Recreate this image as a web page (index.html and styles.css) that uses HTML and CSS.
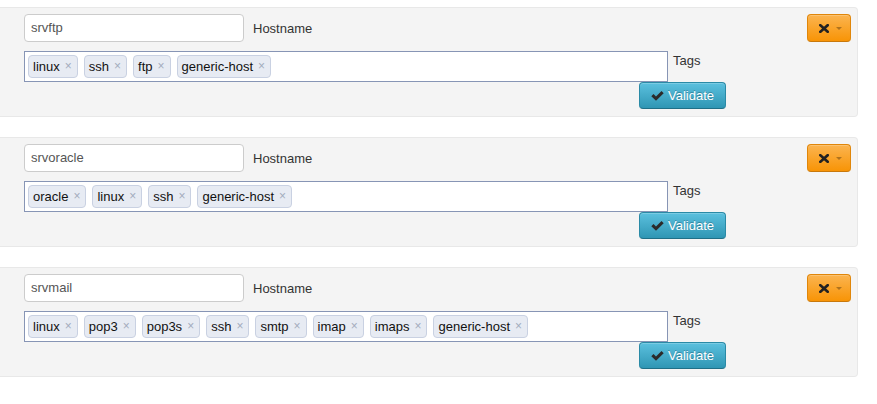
FILE: index.html
```html
<!DOCTYPE html>
<html>
<head>
<meta charset="utf-8">
<link rel="stylesheet" href="styles.css">
</head>
<body>
<div class="host">
  <div class="main">
    <div class="row-host">
      <div class="text-input">srvftp</div>
      <span class="label">Hostname</span>
    </div>
    <div class="row-tags">
      <div class="tag-box">
        <span class="tag">linux<span class="rm">×</span></span>
        <span class="tag">ssh<span class="rm">×</span></span>
        <span class="tag">ftp<span class="rm">×</span></span>
        <span class="tag">generic-host<span class="rm">×</span></span>
      </div>
      <span class="label label-tags">Tags</span>
    </div>
    <div class="row-actions">
      <button class="btn-validate"><svg class="ico-ok" viewBox="0 0 13 10" width="13" height="10"><path d="M0.3 5.2 L2.5 3 L5 5.4 L10.5 0 L12.7 2.2 L5 9.8 Z" fill="#2b2b2b"/></svg>Validate</button>
    </div>
  </div>
  <div class="side">
    <button class="btn-warn"><svg class="ico-x" viewBox="0 0 10 9" width="10" height="9"><path d="M1.3 1.2 L8.7 7.8 M8.7 1.2 L1.3 7.8" stroke="#222" stroke-width="2.7" stroke-linecap="square"/></svg><span class="caret"></span></button>
  </div>
</div>

<div class="host">
  <div class="main">
    <div class="row-host">
      <div class="text-input">srvoracle</div>
      <span class="label">Hostname</span>
    </div>
    <div class="row-tags">
      <div class="tag-box">
        <span class="tag">oracle<span class="rm">×</span></span>
        <span class="tag">linux<span class="rm">×</span></span>
        <span class="tag">ssh<span class="rm">×</span></span>
        <span class="tag">generic-host<span class="rm">×</span></span>
      </div>
      <span class="label label-tags">Tags</span>
    </div>
    <div class="row-actions">
      <button class="btn-validate"><svg class="ico-ok" viewBox="0 0 13 10" width="13" height="10"><path d="M0.3 5.2 L2.5 3 L5 5.4 L10.5 0 L12.7 2.2 L5 9.8 Z" fill="#2b2b2b"/></svg>Validate</button>
    </div>
  </div>
  <div class="side">
    <button class="btn-warn"><svg class="ico-x" viewBox="0 0 10 9" width="10" height="9"><path d="M1.3 1.2 L8.7 7.8 M8.7 1.2 L1.3 7.8" stroke="#222" stroke-width="2.7" stroke-linecap="square"/></svg><span class="caret"></span></button>
  </div>
</div>

<div class="host">
  <div class="main">
    <div class="row-host">
      <div class="text-input">srvmail</div>
      <span class="label">Hostname</span>
    </div>
    <div class="row-tags">
      <div class="tag-box">
        <span class="tag">linux<span class="rm">×</span></span>
        <span class="tag">pop3<span class="rm">×</span></span>
        <span class="tag">pop3s<span class="rm">×</span></span>
        <span class="tag">ssh<span class="rm">×</span></span>
        <span class="tag">smtp<span class="rm">×</span></span>
        <span class="tag">imap<span class="rm">×</span></span>
        <span class="tag">imaps<span class="rm">×</span></span>
        <span class="tag">generic-host<span class="rm">×</span></span>
      </div>
      <span class="label label-tags">Tags</span>
    </div>
    <div class="row-actions">
      <button class="btn-validate"><svg class="ico-ok" viewBox="0 0 13 10" width="13" height="10"><path d="M0.3 5.2 L2.5 3 L5 5.4 L10.5 0 L12.7 2.2 L5 9.8 Z" fill="#2b2b2b"/></svg>Validate</button>
    </div>
  </div>
  <div class="side">
    <button class="btn-warn"><svg class="ico-x" viewBox="0 0 10 9" width="10" height="9"><path d="M1.3 1.2 L8.7 7.8 M8.7 1.2 L1.3 7.8" stroke="#222" stroke-width="2.7" stroke-linecap="square"/></svg><span class="caret"></span></button>
  </div>
</div>
</body>
</html>
```

FILE: styles.css
```css
* { box-sizing: border-box; }
html, body { margin: 0; padding: 0; background: #fff; }
body {
  padding-top: 7px;
  font-family: "Liberation Sans", Arial, sans-serif;
  font-size: 13px;
  color: #333;
}
.host {
  display: flex;
  width: 858px;
  height: 110px;
  margin-bottom: 20px;
  padding: 6px 6px 0 24px;
  background: #f4f4f4;
  border: 1px solid #e8e8e8;
  border-left: 0;
  border-radius: 0 4px 4px 0;
}
.main {
  width: 702px;
  display: flex;
  flex-direction: column;
}
.row-host {
  display: flex;
  align-items: center;
  gap: 9px;
}
.text-input {
  width: 220px;
  height: 28px;
  padding: 0 6px;
  line-height: 26px;
  background: #fff;
  border: 1px solid #ccc;
  border-radius: 4px;
  color: #555;
}
.label {
  line-height: 15px;
  color: #333;
}
.row-tags {
  display: flex;
  align-items: flex-start;
  gap: 5px;
  margin-top: 9px;
}
.tag-box {
  width: 644px;
  height: 31px;
  padding: 3px;
  display: flex;
  gap: 6px;
  background: #fff;
  border: 1px solid #8795b5;
}
.tag {
  display: flex;
  align-items: center;
  height: 23px;
  line-height: 21px;
  padding: 0 5px 0 4px;
  background: #e7ebf3;
  border: 1px solid #c9d1e2;
  border-radius: 4px;
  color: #111;
}
.rm {
  margin-left: 5px;
  font-size: 12px;
  color: #a3abbd;
}
.label-tags { padding-top: 2px; }
.row-actions {
  display: flex;
  justify-content: flex-end;
}
.btn-validate {
  display: flex;
  align-items: center;
  gap: 4px;
  width: 87px;
  height: 27px;
  padding: 0 0 0 11px;
  font-family: inherit;
  font-size: 13px;
  color: #fff;
  text-shadow: 0 -1px 0 rgba(0,0,0,0.25);
  background: linear-gradient(#5bc0de, #2f96b4);
  border: 1px solid #2a8aa6;
  border-bottom-color: #1f6f87;
  border-radius: 4px;
  box-shadow: inset 0 1px 0 rgba(255,255,255,0.2);
}
.ico-ok { display: block; }
.side {
  margin-left: auto;
}
.btn-warn {
  display: flex;
  align-items: center;
  width: 44px;
  height: 28px;
  padding: 0 0 0 11px;
  background: linear-gradient(#fbb450, #f89406);
  border: 1px solid #e0860a;
  border-bottom-color: #c8780b;
  border-radius: 4px;
  box-shadow: inset 0 1px 0 rgba(255,255,255,0.2);
}
.ico-x { display: block; }
.caret {
  margin-left: 7px;
  margin-top: 1px;
  width: 0;
  height: 0;
  border-top: 3px solid rgba(0,0,0,0.3);
  border-left: 3px solid transparent;
  border-right: 3px solid transparent;
}
```
